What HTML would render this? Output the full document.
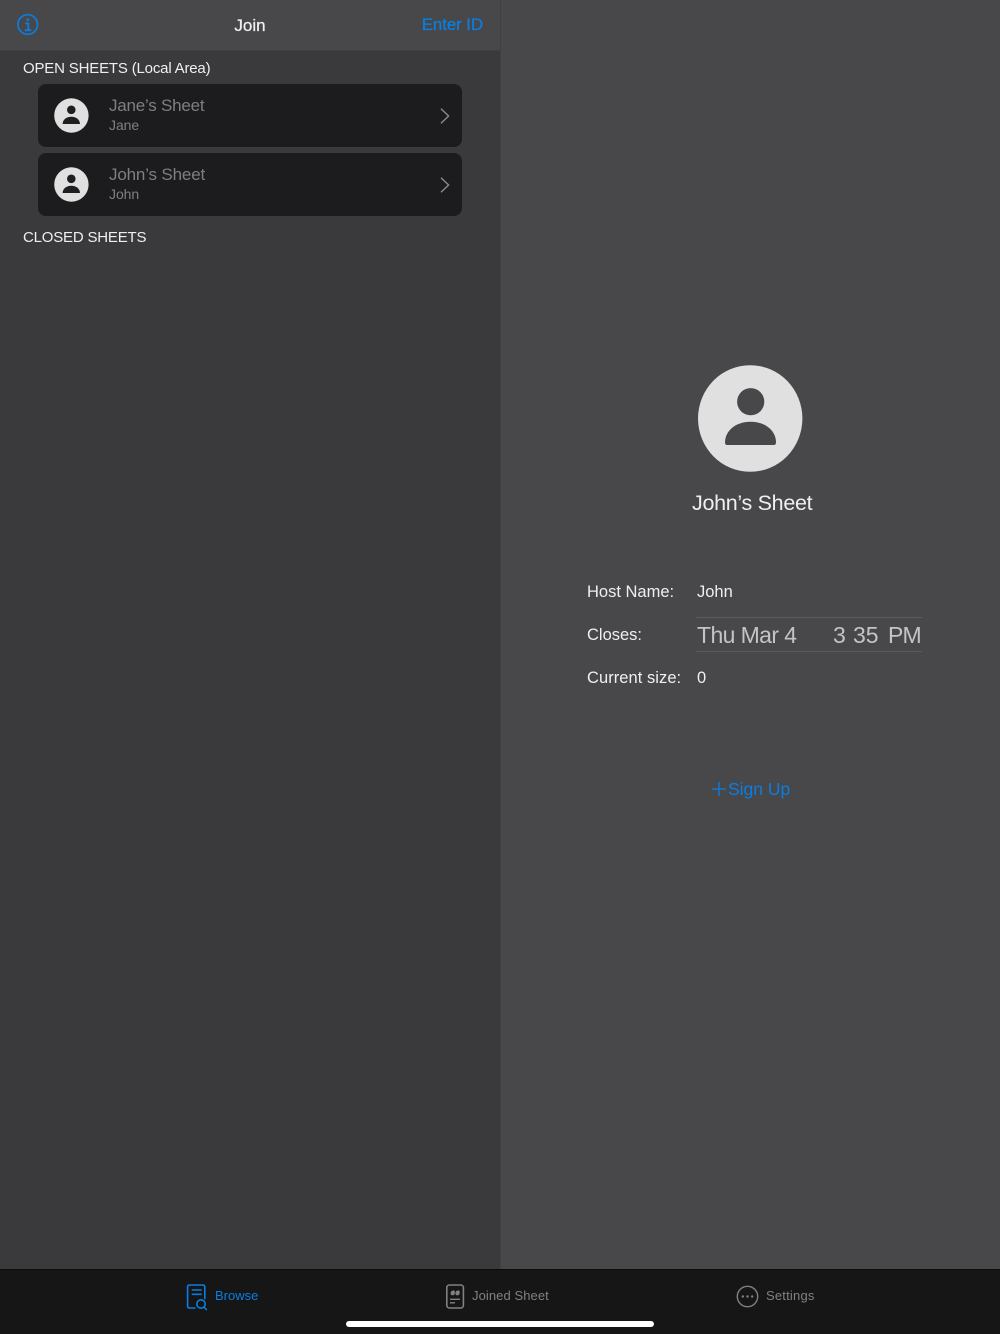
<!DOCTYPE html>
<html><head><meta charset="utf-8">
<style>
html,body{margin:0;padding:0;background:#48484a}
body{width:1000px;height:1334px;position:relative;overflow:hidden;font-family:"Liberation Sans",sans-serif}
.a{position:absolute;white-space:nowrap;line-height:1}
svg{position:absolute;display:block}
</style></head><body>
<div class="a" style="left:0;top:0;width:500px;height:1269px;background:#3a3a3c"></div>
<div class="a" style="left:0;top:0;width:500px;height:50px;background:#48484a;border-bottom:1px solid #404042"></div>
<div class="a" style="left:500px;top:0;width:1px;height:1269px;background:#404042"></div>

<svg style="left:16px;top:13px" width="24" height="24" viewBox="0 0 24 24" fill="none" stroke="#0a7ee0"><circle cx="11.7" cy="11.5" r="9.8" stroke-width="1.7"/><circle cx="11.8" cy="6.6" r="1.4" fill="#0a7ee0" stroke="none"/><path d="M9.2 10.4H12.3V17M8.8 17.2H15.2" stroke-width="1.8"/></svg>
<div class="a" style="left:150px;width:200px;text-align:center;top:17px;font-size:17px;color:#f0f0f0;-webkit-text-stroke:.25px #f0f0f0">Join</div>
<div class="a" style="right:517px;top:17px;font-size:16.7px;color:#0a7ee0;-webkit-text-stroke:.3px #0a7ee0">Enter ID</div>

<div class="a" style="left:23px;top:61px;font-size:15px;color:#efefef;letter-spacing:-.18px">OPEN SHEETS (Local Area)</div>

<div class="a" style="left:38px;top:84px;width:424px;height:63px;background:#1c1c1e;border-radius:8px"></div>
<svg style="left:54px;top:98px" width="35" height="35" viewBox="0 0 35 35"><circle cx="17.4" cy="17.5" r="17.2" fill="#e0e0e0"/><circle cx="17.3" cy="11.8" r="4.3" fill="#1f1f21"/><path d="M8.6 26C8.8 21.5 12.5 18.8 17.3 18.8S25.8 21.5 26 26Z" fill="#1f1f21"/></svg>
<div class="a" style="left:109px;top:97px;font-size:17px;letter-spacing:-.22px;color:#7f7f82">Jane’s Sheet</div>
<div class="a" style="left:109px;top:118px;font-size:14px;letter-spacing:-.05px;color:#7f7f82">Jane</div>
<svg style="left:438px;top:107px" width="14" height="18" viewBox="0 0 14 18" fill="none"><path d="M3 1.8L10.6 9L3 16.2" stroke="#8a8a8d" stroke-width="1.4"/></svg>

<div class="a" style="left:38px;top:153px;width:424px;height:63px;background:#1c1c1e;border-radius:8px"></div>
<svg style="left:54px;top:167px" width="35" height="35" viewBox="0 0 35 35"><circle cx="17.4" cy="17.5" r="17.2" fill="#e0e0e0"/><circle cx="17.3" cy="11.8" r="4.3" fill="#1f1f21"/><path d="M8.6 26C8.8 21.5 12.5 18.8 17.3 18.8S25.8 21.5 26 26Z" fill="#1f1f21"/></svg>
<div class="a" style="left:109px;top:166px;font-size:17px;letter-spacing:-.16px;color:#7f7f82">John’s Sheet</div>
<div class="a" style="left:109px;top:187px;font-size:14px;letter-spacing:-.05px;color:#7f7f82">John</div>
<svg style="left:438px;top:176px" width="14" height="18" viewBox="0 0 14 18" fill="none"><path d="M3 1.8L10.6 9L3 16.2" stroke="#8a8a8d" stroke-width="1.4"/></svg>

<div class="a" style="left:23px;top:230px;font-size:15px;color:#efefef;letter-spacing:-.2px">CLOSED SHEETS</div>

<svg style="left:698px;top:365px" width="105" height="107" viewBox="0 0 105 107"><ellipse cx="52.2" cy="53.5" rx="52.2" ry="53.3" fill="#e0e0e0"/><circle cx="52.7" cy="36.7" r="13.6" fill="#48484a"/><path d="M27 77.5C27 65.5 38 56.7 52.5 56.7S78 65.5 78 77.5Q78 80 75.8 80H29.2Q27 80 27 77.5Z" fill="#48484a"/></svg>
<div class="a" style="left:692px;top:493px;font-size:21.5px;color:#efefef;letter-spacing:-.3px">John’s Sheet</div>

<div class="a" style="left:587px;top:584px;font-size:16.5px;color:#efefef">Host Name:</div>
<div class="a" style="left:697px;top:584px;font-size:16.5px;color:#efefef">John</div>
<div class="a" style="left:696px;top:617px;width:226px;height:1px;background:#5a5a5c"></div>
<div class="a" style="left:696px;top:651px;width:226px;height:1px;background:#5a5a5c"></div>
<div class="a" style="left:587px;top:627px;font-size:16.5px;color:#efefef">Closes:</div>
<div class="a" style="left:697px;top:624px;font-size:23px;letter-spacing:-.6px;color:#c4c4c6">Thu Mar 4</div>
<div class="a" style="left:833px;top:624px;font-size:23px;color:#c4c4c6">3</div>
<div class="a" style="left:853px;top:624px;font-size:23px;color:#c4c4c6">35</div>
<div class="a" style="left:888px;top:624px;font-size:23px;letter-spacing:-.9px;color:#c4c4c6">PM</div>
<div class="a" style="left:587px;top:670px;font-size:16.5px;letter-spacing:.05px;color:#efefef">Current size:</div>
<div class="a" style="left:697px;top:670px;font-size:16.5px;color:#efefef">0</div>

<svg style="left:711px;top:781px" width="16" height="16" viewBox="0 0 16 16"><path d="M1 8H15M8 1V15" stroke="#0a7ee0" stroke-width="1.3"/></svg>
<div class="a" style="left:728px;top:781px;font-size:17.5px;color:#0a7ee0">Sign Up</div>

<div class="a" style="left:0;top:1269px;width:1000px;height:65px;background:#161617;border-top:1px solid #0c0c0c;box-sizing:border-box"></div>

<svg style="left:186px;top:1284px" width="22" height="27" viewBox="0 0 22 27" fill="none" stroke="#0a7ee0" stroke-width="1.6"><path d="M9.5 24H3.6C2.4 24 1.6 23.2 1.6 22V3C1.6 1.8 2.4 1 3.6 1H16.8C18 1 18.8 1.8 18.8 3V15.2"/><path d="M5.7 6H15.7M5.7 10.3H15.7"/><circle cx="15" cy="20" r="4.2"/><path d="M18 23L20.8 26"/></svg>
<div class="a" style="left:215px;top:1289px;font-size:13px;color:#0a7ee0">Browse</div>

<svg style="left:445px;top:1284px" width="20" height="26" viewBox="0 0 20 26" fill="none" stroke="#818184"><rect x="1.8" y="1" width="16.6" height="23" rx="2.6" stroke-width="1.6"/><path d="M5 15.3H15M5 18.8H10" stroke-width="1.3"/><path d="M5.6 9.4C5.6 7.4 7 6.5 8.8 6.4C9.8 6.4 9.9 7.6 9.9 8.8C9.9 10.4 9 11.4 7.7 11.4C6.4 11.4 5.6 10.6 5.6 9.4ZM10.4 9.4C10.4 7.4 11.8 6.5 13.6 6.4C14.6 6.4 14.7 7.6 14.7 8.8C14.7 10.4 13.8 11.4 12.5 11.4C11.2 11.4 10.4 10.6 10.4 9.4Z" fill="#818184" stroke="none"/></svg>
<div class="a" style="left:472px;top:1289px;font-size:13px;color:#818184;letter-spacing:.08px">Joined Sheet</div>

<svg style="left:736px;top:1285px" width="23" height="23" viewBox="0 0 23 23" fill="none"><circle cx="11.5" cy="11.5" r="10.2" stroke="#818184" stroke-width="1.4"/><circle cx="6.8" cy="11.5" r="1.2" fill="#818184"/><circle cx="11.5" cy="11.5" r="1.2" fill="#818184"/><circle cx="16.2" cy="11.5" r="1.2" fill="#818184"/></svg>
<div class="a" style="left:766px;top:1289px;font-size:13px;color:#818184;letter-spacing:.2px">Settings</div>

<div class="a" style="left:346px;top:1321px;width:308px;height:6px;border-radius:3px;background:#fff"></div>
</body></html>
